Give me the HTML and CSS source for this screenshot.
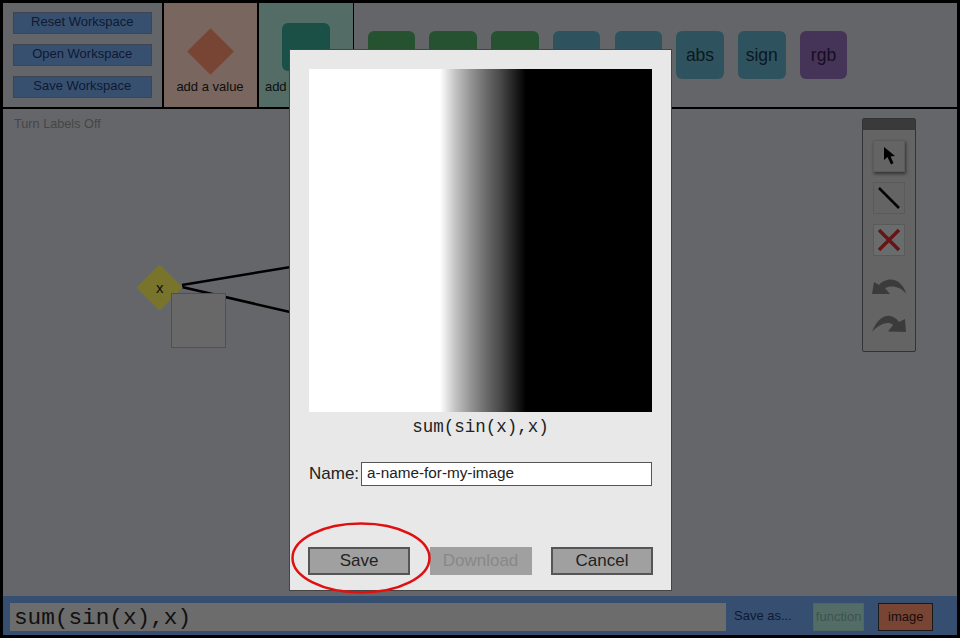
FILE: index.html
```html
<!DOCTYPE html>
<html lang="en">
<head>
    <meta charset="UTF-8">
    <meta name="viewport" content="width=device-width, initial-scale=1.0">
    <title>Save Image</title>
    <link rel="stylesheet" href="styles.css">
</head>
<body>
    <div class="app">
        <div class="toolbar">
            <div class="workspace-panel">
                <button class="ws-button">Reset Workspace</button>
                <button class="ws-button">Open Workspace</button>
                <button class="ws-button">Save Workspace</button>
            </div>
            <div class="add-cell add-value">
                <div class="add-icon"><div class="value-shape"></div></div>
                <div class="add-label">add a value</div>
            </div>
            <div class="add-cell add-function">
                <div class="add-icon"><div class="function-shape"></div></div>
                <div class="add-label">add a function</div>
            </div>
            <div class="function-list">
                <div class="fn fn-green"></div>
                <div class="fn fn-green"></div>
                <div class="fn fn-green"></div>
                <div class="fn fn-teal"></div>
                <div class="fn fn-teal"></div>
                <div class="fn fn-teal">abs</div>
                <div class="fn fn-teal">sign</div>
                <div class="fn fn-purple">rgb</div>
            </div>
        </div>

        <div class="canvas">
            <div class="labels-toggle">Turn Labels Off</div>

            <svg class="wires" width="954" height="487" viewBox="0 0 954 487">
                <line x1="179" y1="176" x2="300" y2="156" />
                <line x1="179" y1="178" x2="300" y2="206" />
            </svg>

            <div class="node-value"><span>x</span></div>
            <div class="node-image"></div>

            <div class="toolbox">
                <div class="toolbox-title"></div>
                <div class="tool tool-active">
                    <svg width="13" height="18" viewBox="0 0 13 18"><path class="icon-fill" d="M1 0 L1 13 L4.5 10 L8 17.5 L10.5 16 L7.5 9.5 L12 9 Z" /></svg>
                </div>
                <div class="tool">
                    <svg width="24" height="24" viewBox="0 0 24 24"><line class="icon-line" x1="2" y1="2" x2="22" y2="22" /></svg>
                </div>
                <div class="tool tool-delete">
                    <svg width="24" height="24" viewBox="0 0 24 24"><path class="icon-x" d="M2 2 L22 22 M22 2 L2 22" /></svg>
                </div>
                <div class="history history-undo">
                    <svg width="35" height="18" viewBox="0 0 35 18"><path class="icon-arrow" d="M0 17 L2 5 L7 8 C13 1 28 -2 34.5 17 C28 9 19 8 13 11 L18 17 Z" /></svg>
                </div>
                <div class="history history-redo">
                    <svg width="35" height="18" viewBox="0 0 35 18"><path class="icon-arrow" d="M34 18 L33 5 L27 8 C20 -2 7 -1 0 18 C8 9 17 7 21 11 L16 17.5 Z" /></svg>
                </div>
            </div>
        </div>

        <div class="entry-bar">
            <input class="entry-input" type="text" value="sum(sin(x),x)">
            <span class="save-as">Save as...</span>
            <button class="save-type save-function">function</button>
            <button class="save-type save-image">image</button>
        </div>
    </div>

    <div class="overlay"></div>

    <div class="dialog">
        <div class="preview"></div>
        <div class="preview-code">sum(sin(x),x)</div>
        <div class="name-row">
            <label for="image-name">Name:</label>
            <input id="image-name" type="text" value="a-name-for-my-image">
        </div>
        <div class="dialog-buttons">
            <button class="dlg-button">Save</button>
            <button class="dlg-button dlg-disabled">Download</button>
            <button class="dlg-button">Cancel</button>
        </div>
    </div>

    <svg class="callout" width="142" height="74" viewBox="0 0 142 74">
        <ellipse cx="71" cy="37" rx="68.5" ry="34.5" />
    </svg>
</body>
</html>
```

FILE: styles.css
```css
* {
    box-sizing: border-box;
}

html, body {
    margin: 0;
    height: 100%;
    overflow: hidden;
}

body {
    font-family: "Liberation Sans", Arial, sans-serif;
    background: #000;
}

button {
    font-family: inherit;
}

.app {
    width: 960px;
    height: 638px;
    padding: 3px;
    display: flex;
    flex-direction: column;
    background: #000;
}

/* top bar */
.toolbar {
    height: 104px;
    display: flex;
}

.workspace-panel {
    width: 158.5px;
    padding: 9px 10px 0;
    display: flex;
    flex-direction: column;
    gap: 10px;
    background: #c6cad0;
}

.ws-button {
    height: 22px;
    padding: 0 0 3px;
    font-size: 13px;
    color: #1e3464;
    background: #6ea0e0;
    border: 1px solid #7a88a8;
}

.add-cell {
    display: flex;
    flex-direction: column;
    align-items: center;
}

.add-value {
    width: 93px;
    margin-left: 2px;
    background: #f0ccbe;
}

.add-function {
    width: 93.5px;
    margin-left: 2.5px;
    background: #a6d8cc;
}

.add-icon {
    height: 72px;
    padding-top: 20px;
}

.value-shape {
    width: 33px;
    height: 33px;
    margin: 12px 7px 0;
    background: #f08a68;
    transform: rotate(45deg);
}

.function-shape {
    width: 48px;
    height: 48px;
    border-radius: 6px;
    background: #34a08a;
}

.add-label {
    margin-top: 4px;
    font-size: 13px;
    white-space: nowrap;
    color: #222;
}

.function-list {
    flex: 1;
    margin-left: 1.5px;
    padding: 28px 0 0 13.5px;
    display: flex;
    gap: 14.25px;
    background: #c6cad0;
}

.fn {
    width: 47.5px;
    height: 48px;
    border-radius: 6px;
    display: flex;
    align-items: center;
    justify-content: center;
    font-size: 17.5px;
    color: #183040;
}

.fn-green {
    background: #4ea464;
}

.fn-teal {
    background: #5ca6bc;
}

.fn-purple {
    background: #8a68ae;
    color: #2c1c44;
}

/* workspace */
.canvas {
    position: relative;
    flex: 1;
    margin-top: 2px;
    background: #c8ccd4;
}

.labels-toggle {
    padding: 8px 0 0 11px;
    font-size: 12.7px;
    color: #8c8c8c;
}

.wires {
    position: absolute;
    left: 0;
    top: 0;
}

.wires line {
    stroke: #000;
    stroke-width: 2.5;
}

.node-value {
    position: absolute;
    left: 140px;
    top: 162px;
    width: 33px;
    height: 33px;
    display: flex;
    align-items: center;
    justify-content: center;
    background: #f0e858;
    transform: rotate(45deg);
}

.node-value span {
    font-size: 15px;
    color: #222;
    transform: rotate(-45deg);
}

.node-image {
    position: absolute;
    left: 168px;
    top: 184px;
    width: 55px;
    height: 55px;
    background: #d0d0d0;
    border: 1px solid #a0a0a8;
}

.toolbox {
    position: absolute;
    left: 859px;
    top: 9px;
    width: 54px;
    height: 234px;
    display: flex;
    flex-direction: column;
    align-items: center;
    background: #c8c8c8;
    border: 1px solid #666;
    border-radius: 2px;
}

.toolbox-title {
    width: 100%;
    height: 11px;
    margin-bottom: 10px;
    background: #747474;
}

.tool {
    width: 32px;
    height: 32px;
    margin-bottom: 10px;
    display: flex;
    align-items: center;
    justify-content: center;
    border: 1px solid #b4b4b4;
}

.tool-active {
    box-shadow: 1px 2px 3px #666;
}

.tool-delete {
    background: #d0d8d8;
}

.history {
    height: 18px;
    display: flex;
}

.history-undo {
    margin: 11px 0 19px;
}

.icon-fill {
    fill: #000;
}

.icon-line {
    stroke: #000;
    stroke-width: 2.5;
}

.icon-x {
    stroke: #d02828;
    stroke-width: 3.5;
    fill: none;
}

.icon-arrow {
    fill: #777;
}

/* bottom bar */
.entry-bar {
    height: 39px;
    padding: 3px 24px 0 7px;
    display: flex;
    align-items: center;
    background: #6c9ee0;
}

.entry-input {
    flex: none;
    width: 716px;
    height: 28px;
    padding: 2px 4px 0;
    font-family: "Liberation Mono", monospace;
    font-size: 22.7px;
    color: #222;
    background: #d8d8d8;
    border: 0;
}

.save-as {
    width: 58px;
    margin: 0 0 4px 8px;
    font-size: 13px;
    white-space: nowrap;
    color: #1e3464;
}

.save-type {
    height: 28px;
    padding: 0 0 2px;
    font-size: 13px;
}

.save-function {
    width: 52px;
    margin-left: 21px;
    color: #7aa89e;
    background: #a6d8cc;
    border: 1px solid #a0ccc2;
}

.save-image {
    width: 55px;
    margin-left: 14px;
    color: #331a14;
    background: #f08a68;
    border: 1px solid #333;
}

/* modal */
.overlay {
    position: fixed;
    left: 0;
    top: 0;
    width: 100%;
    height: 100%;
    background: rgba(0, 0, 0, 0.5);
}

.dialog {
    position: absolute;
    left: 289px;
    top: 49px;
    width: 383px;
    height: 542px;
    padding: 19px 19px 0;
    display: flex;
    flex-direction: column;
    background: #e8e8e8;
    border: 1px solid #444;
}

.preview {
    width: 343px;
    height: 343px;
    background: linear-gradient(90deg, #fff 131px, #c4c4c4 146px, #969696 161px, #666 179px, #4a4a4a 191px, #1e1e1e 206px, #000 217px);
}

.preview-code {
    margin-top: 5px;
    text-align: center;
    font-family: "Liberation Mono", monospace;
    font-size: 17.5px;
    color: #222;
}

.name-row {
    margin-top: 25px;
    display: flex;
    align-items: center;
    font-size: 17px;
    color: #222;
}

.name-row input {
    width: 292px;
    height: 24px;
    margin-left: 2px;
    padding: 0 5px 2px;
    font-family: inherit;
    font-size: 15.3px;
    color: #222;
    background: #fff;
    border: 1px solid #555;
}

.dialog-buttons {
    margin: 61px -1px 0;
    display: flex;
    justify-content: space-between;
}

.dlg-button {
    width: 102px;
    height: 28px;
    padding: 0 0 1px;
    font-size: 17px;
    color: #222;
    background: #a0a0a0;
    border: 2px solid #555;
}

.dlg-disabled {
    color: #888;
    border-color: #a0a0a0;
}

.callout {
    position: absolute;
    left: 290px;
    top: 521px;
}

.callout ellipse {
    fill: none;
    stroke: #e01010;
    stroke-width: 2.5;
}
```
